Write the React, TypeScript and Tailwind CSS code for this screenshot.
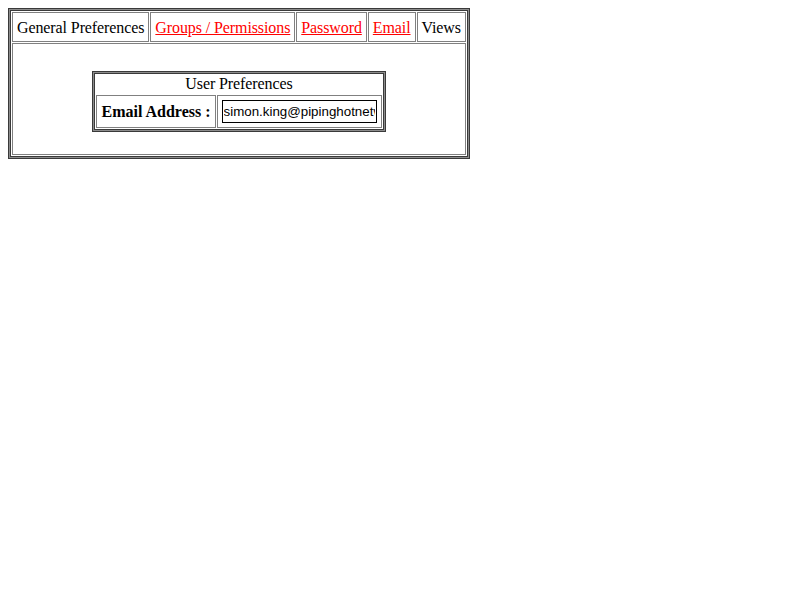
import React from 'react';

const tabs: { label: string; link: boolean }[] = [
  { label: 'General Preferences', link: false },
  { label: 'Groups / Permissions', link: true },
  { label: 'Password', link: true },
  { label: 'Email', link: true },
  { label: 'Views', link: false },
];

// old-school table frame: dark / gray / dark
const Frame: React.FC<{ children: React.ReactNode }> = ({ children }) => (
  <div className="inline-block border border-[#3a3a3a] bg-[#8c8c8c] p-px">
    <div className="border border-[#3a3a3a] bg-white">{children}</div>
  </div>
);

export default function App() {
  return (
    <div className="min-h-screen bg-white p-2 font-['Liberation_Serif',serif] text-base tracking-[-0.1px] text-black">
      <Frame>
        <table className="border-separate border-spacing-px">
          <tbody>
            <tr>
              {tabs.map((t) => (
                <td key={t.label} className="border border-[#808080] px-1 pt-[5px] pb-[3px] leading-5 whitespace-nowrap">
                  {t.link ? (
                    <a href="#" className="text-[#ff0000] underline">
                      {t.label}
                    </a>
                  ) : (
                    t.label
                  )}
                </td>
              ))}
            </tr>
            <tr>
              <td colSpan={5} className="border border-[#808080] pt-[27px] pb-[22px] text-center">
                <Frame>
                  <div className="leading-5 text-center">User Preferences</div>
                  <table className="border-separate border-spacing-px">
                    <tbody>
                      <tr>
                        <td className="border border-[#808080] px-1 py-1 font-bold leading-5 tracking-normal whitespace-nowrap">
                          Email Address :
                        </td>
                        <td className="border border-[#808080] p-1">
                          <input
                            type="text"
                            readOnly
                            value="simon.king@pipinghotnetworks.com"
                            className="block h-[23px] w-[155px] border border-black bg-white px-px font-['Liberation_Sans',Arial,sans-serif] text-[13.33px] tracking-normal text-black outline-none"
                          />
                        </td>
                      </tr>
                    </tbody>
                  </table>
                </Frame>
              </td>
            </tr>
          </tbody>
        </table>
      </Frame>
    </div>
  );
}
